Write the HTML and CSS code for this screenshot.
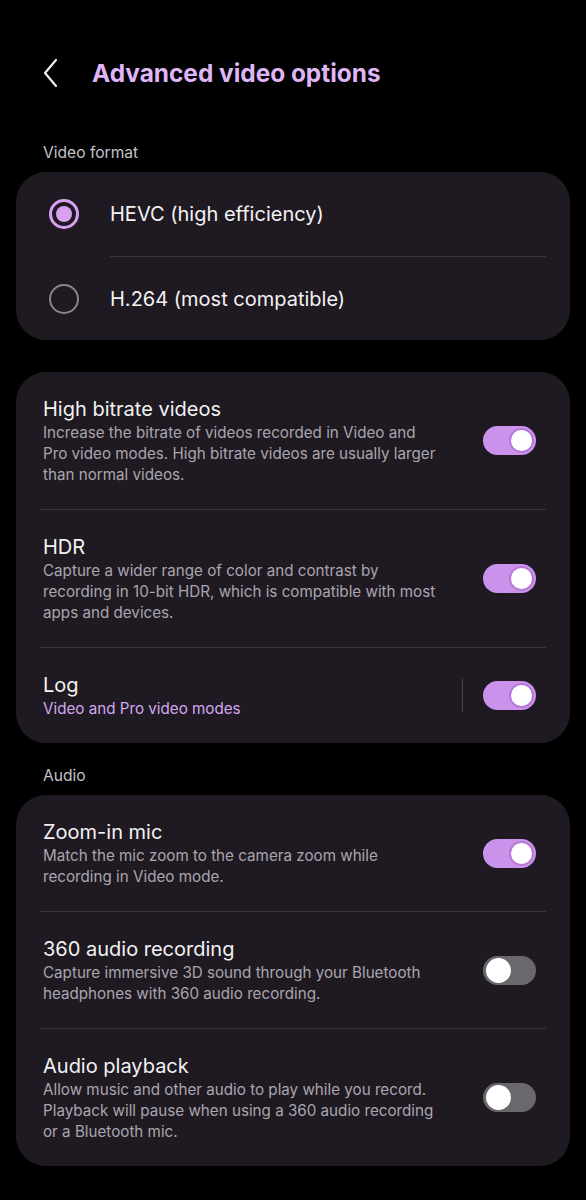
FILE: index.html
```html
<!DOCTYPE html>
<html lang="en">

<head>
    <meta charset="UTF-8">
    <meta content="width=device-width, initial-scale=1.0" name="viewport">
    <title>Advanced video options</title>
    <link rel="stylesheet" href="styles.css">
</head>

<body>
<header class="top-bar">
    <button class="back" aria-label="Back">
        <svg width="20" height="32" viewBox="0 0 20 32">
            <path d="M16 3 L5 16 L16 29" fill="none" stroke="#f0f0f0" stroke-width="2.2" stroke-linecap="round" stroke-linejoin="round"/>
        </svg>
    </button>
    <h1>Advanced video options</h1>
</header>

<div class="section-label">Video format</div>
<div class="card">
    <div class="radio-row">
        <span class="radio checked"></span>
        <span class="radio-text">HEVC (high efficiency)</span>
    </div>
    <div class="divider indent"></div>
    <div class="radio-row">
        <span class="radio"></span>
        <span class="radio-text">H.264 (most compatible)</span>
    </div>
</div>

<div class="card spaced">
    <div class="row">
        <div class="text">
            <div class="title">High bitrate videos</div>
            <div class="desc">Increase the bitrate of videos recorded in Video and Pro video modes. High bitrate videos are usually larger than normal videos.</div>
        </div>
        <span class="switch on"></span>
    </div>
    <div class="divider"></div>
    <div class="row">
        <div class="text">
            <div class="title">HDR</div>
            <div class="desc">Capture a wider range of color and contrast by recording in 10-bit HDR, which is compatible with most apps and devices.</div>
        </div>
        <span class="switch on"></span>
    </div>
    <div class="divider"></div>
    <div class="row">
        <div class="text">
            <div class="title">Log</div>
            <div class="desc accent">Video and Pro video modes</div>
        </div>
        <span class="vline"></span>
        <span class="switch on"></span>
    </div>
</div>

<div class="section-label">Audio</div>
<div class="card">
    <div class="row">
        <div class="text">
            <div class="title">Zoom-in mic</div>
            <div class="desc">Match the mic zoom to the camera zoom while recording in Video mode.</div>
        </div>
        <span class="switch on"></span>
    </div>
    <div class="divider"></div>
    <div class="row">
        <div class="text">
            <div class="title">360 audio recording</div>
            <div class="desc">Capture immersive 3D sound through your Bluetooth headphones with 360 audio recording.</div>
        </div>
        <span class="switch"></span>
    </div>
    <div class="divider"></div>
    <div class="row">
        <div class="text">
            <div class="title">Audio playback</div>
            <div class="desc">Allow music and other audio to play while you record. Playback will pause when using a 360 audio recording or a Bluetooth mic.</div>
        </div>
        <span class="switch"></span>
    </div>
</div>
</body>

</html>
```

FILE: styles.css
```css
html, body {
    margin: 0;
    padding: 0;
    background: #000;
}

body {
    font-family: Inter, "Noto Sans", sans-serif;
    color: #f2f2f2;
    width: 586px;
    height: 1200px;
    overflow: hidden;
}

.top-bar {
    display: flex;
    align-items: center;
    height: 34px;
    padding: 56px 0 30px 40px;
}

.back {
    background: none;
    border: 0;
    padding: 0;
    width: 24px;
    height: 32px;
    display: flex;
    align-items: center;
}

.top-bar h1 {
    margin: 0 0 0 28px;
    font-size: 24.4px;
    font-weight: 700;
    color: #dfb6f5;
}

.section-label {
    margin: 23px 0 9px 43px;
    font-size: 15.6px;
    line-height: 20px;
    color: #c6c0ca;
}

.card {
    margin: 0 16px;
    background: #1f1a22;
    border-radius: 30px;
}

.card.spaced {
    margin-top: 32px;
}

.radio-row {
    display: flex;
    align-items: center;
    height: 84px;
    padding-left: 33px;
}

.radio-row:last-child {
    height: 83px;
}

.radio {
    box-sizing: border-box;
    width: 30px;
    height: 30px;
    border: 2.5px solid #8a848d;
    border-radius: 50%;
    display: flex;
    align-items: center;
    justify-content: center;
}

.radio.checked {
    border-width: 3px;
    border-color: #d8a2f2;
}

.radio.checked::after {
    content: "";
    width: 16px;
    height: 16px;
    border-radius: 50%;
    background: #d8a2f2;
}

.radio-text {
    margin-left: 31px;
    font-size: 20px;
}

.divider {
    height: 1px;
    margin: 0 24px;
    background: #3a343e;
}

.divider.indent {
    margin-left: 94px;
}

.row {
    display: flex;
    align-items: center;
    padding: 24px 34px 24px 27px;
}

.text {
    flex: 1;
}

.title {
    font-size: 20px;
    line-height: 26px;
}

.desc {
    font-size: 15.2px;
    line-height: 21px;
    color: #aaa5ae;
    padding-right: 43px;
}

.desc.accent {
    color: #d3a8ee;
}

.vline {
    width: 1px;
    height: 33px;
    background: #4a4550;
    margin-right: 20px;
}

.switch {
    position: relative;
    flex: none;
    width: 53px;
    height: 29px;
    border-radius: 15px;
    background: #6a686c;
}

.switch::after {
    content: "";
    position: absolute;
    top: 2px;
    left: 3px;
    width: 25px;
    height: 25px;
    border-radius: 50%;
    background: #fff;
}

.switch.on {
    background: #cb92ec;
}

.switch.on::after {
    left: auto;
    right: 2px;
    box-sizing: border-box;
    border: 2px solid #b77ad9;
}
```
